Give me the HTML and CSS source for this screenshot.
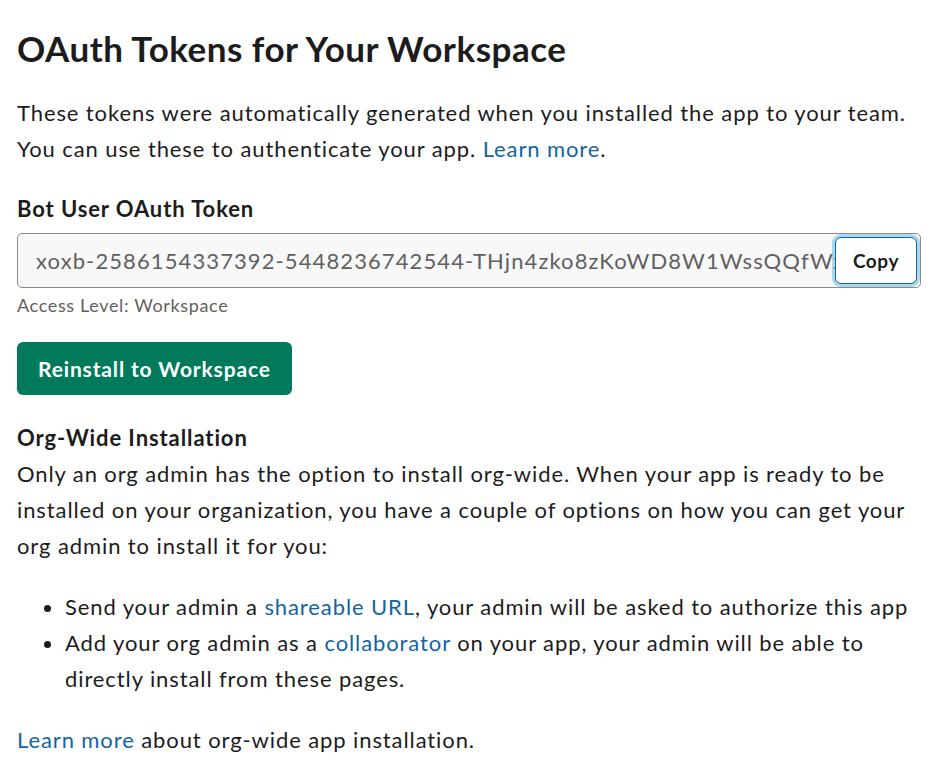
FILE: index.html
```html
<!DOCTYPE html>
<html>
<head>
<meta charset="utf-8">
<link rel="stylesheet" href="styles.css">
</head>
<body>
<main class="page">
  <h1 class="title">OAuth Tokens for Your Workspace</h1>
  <p class="intro">These tokens were automatically generated when you installed the app to your team. You can use these to authenticate your app. <a href="#" class="link">Learn more</a>.</p>

  <section class="token">
    <h2 class="label">Bot User OAuth Token</h2>
    <div class="field">
      <span class="field-value">xoxb-2586154337392-5448236742544-THjn4zko8zKoWD8W1WssQQfWxyzABC</span>
      <button class="copy">Copy</button>
    </div>
    <div class="hint">Access Level: Workspace</div>
  </section>

  <button class="primary">Reinstall to Workspace</button>

  <section class="org">
    <h2 class="label">Org-Wide Installation</h2>
    <p class="text">Only an org admin has the option to install org-wide. When your app is ready to be installed on your organization, you have a couple of options on how you can get your org admin to install it for you:</p>
    <ul class="list">
      <li>Send your admin a <a href="#" class="link">shareable URL</a>, your admin will be asked to authorize this app</li>
      <li>Add your org admin as a <a href="#" class="link">collaborator</a> on your app, your admin will be able to directly install from these pages.</li>
    </ul>
    <p class="text"><a href="#" class="link">Learn more</a> about org-wide app installation.</p>
  </section>
</main>
</body>
</html>
```

FILE: styles.css
```css
html, body {
  margin: 0;
  padding: 0;
  background: #ffffff;
}
body {
  font-family: Lato, "Noto Sans", sans-serif;
  color: #1d1c1d;
  font-size: 22px;
  letter-spacing: 0.9px;
  line-height: 36px;
}
.page {
  padding: 24px 20px 0 17px;
  width: 903px;
  box-sizing: content-box;
}
.title {
  font-size: 35px;
  font-weight: 700;
  letter-spacing: 0.5px;
  line-height: 48px;
  margin: 0 0 23px 0;
}
.intro {
  margin: 0 0 24px 0;
}
.link {
  color: #1264a3;
  text-decoration: none;
}
.label {
  font-size: 22px;
  font-weight: 700;
  line-height: 36px;
  margin: 0;
}
.field {
  margin-top: 6px;
  height: 55px;
  box-sizing: border-box;
  border: 1px solid #8c8b8c;
  border-radius: 5px;
  background: #f8f8f8;
  display: flex;
  align-items: center;
  overflow: hidden;
  width: 904px;
}
.field-value {
  flex: 1;
  min-width: 0;
  white-space: nowrap;
  overflow: hidden;
  padding-left: 18px;
  color: #616061;
  font-size: 22px;
  letter-spacing: 1.1px;
}
.copy {
  flex: none;
  margin-right: 3px;
  height: 47px;
  width: 82px;
  border: 1.5px solid #1264a3;
  border-radius: 6px;
  background: #ffffff;
  box-shadow: 0 0 0 3px rgba(29, 155, 209, 0.35);
  font-family: Lato, sans-serif;
  font-weight: 700;
  font-size: 19px;
  letter-spacing: 0.6px;
  color: #1d1c1d;
  padding: 0;
}
.hint {
  color: #616061;
  font-size: 18px;
  letter-spacing: 0.65px;
  line-height: 30px;
  margin-top: 2px;
}
.primary {
  margin-top: 22px;
  height: 53px;
  padding: 0 21px;
  background: #007a5a;
  color: #ffffff;
  border: none;
  border-radius: 6px;
  font-family: Lato, sans-serif;
  font-weight: 700;
  font-size: 21px;
  letter-spacing: 0.85px;
  display: block;
}
.org {
  margin-top: 25px;
}
.text {
  margin: 0;
}
.list {
  margin: 25px 0 25px 0;
  padding-left: 48px;
}
```
